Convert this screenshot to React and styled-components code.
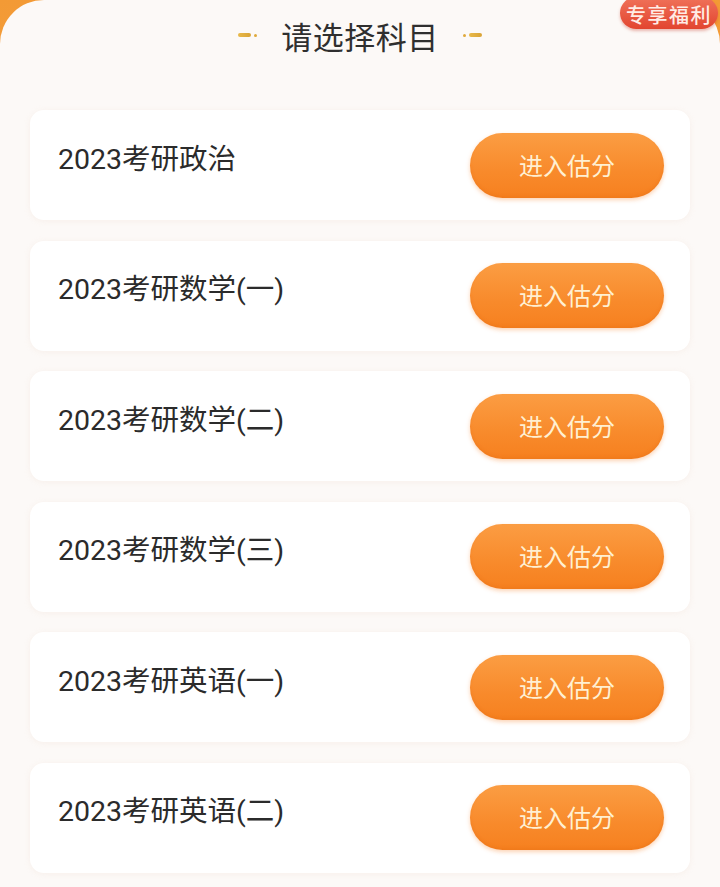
import React from "react";
import styled, { createGlobalStyle } from "styled-components";

const Global = createGlobalStyle`
  html, body { margin: 0; padding: 0; }
  body {
    background: #f7a444;
    font-family: "Roboto", "Noto Sans CJK SC", sans-serif;
  }
`;

const Page = styled.div`
  width: 720px;
  height: 887px;
  overflow: hidden;
  background: linear-gradient(180deg, #f39a35 0%, #f8b868 100%);
  position: relative;
`;

const Panel = styled.div`
  background: #fcf9f7;
  border-radius: 44px 44px 0 0;
  height: 100%;
  box-sizing: border-box;
  padding: 0 30px;
`;

const Header = styled.div`
  height: 70px;
  display: flex;
  align-items: center;
  justify-content: center;
  gap: 24px;
`;

const Title = styled.h1`
  margin: 0;
  font-family: "Noto Sans CJK SC", sans-serif;
  font-weight: 400;
  font-size: 31px;
  color: #2f2f2f;
  letter-spacing: 0.5px;
`;

const Deco = styled.span`
  display: flex;
  align-items: center;
  gap: 3px;
  flex-direction: ${(p) => (p.$flip ? "row-reverse" : "row")};
  & > i {
    display: block;
    width: 13px;
    height: 4px;
    border-radius: 2px;
    background: linear-gradient(90deg, #e8b94a, #d9a335);
  }
  & > b {
    display: block;
    width: 3px;
    height: 3px;
    border-radius: 50%;
    background: #e0a93b;
  }
`;

const Badge = styled.div`
  position: absolute;
  top: -3px;
  right: 2px;
  height: 32px;
  padding: 3px 6px 0;
  display: flex;
  align-items: center;
  justify-content: center;
  border-radius: 16px;
  background: linear-gradient(180deg, #f0725a 0%, #e2452f 100%);
  box-shadow: 0 2px 3px rgba(200, 60, 40, 0.35);
  color: #ffece6;
  font-family: "Noto Sans CJK SC", sans-serif;
  font-size: 20px;
  font-weight: 500;
  letter-spacing: 1.5px;
  line-height: 1;
  box-sizing: border-box;
`;

const List = styled.div`
  display: flex;
  flex-direction: column;
  gap: 20.5px;
  padding-top: 40px;
`;

const Card = styled.div`
  height: 110px;
  background: #ffffff;
  border-radius: 14px;
  box-shadow: 0 1px 6px rgba(230, 200, 185, 0.18);
  display: flex;
  align-items: center;
  justify-content: space-between;
  padding: 0 26px 0 28px;
`;

const Name = styled.div`
  font-family: "Roboto", "Noto Sans CJK SC", sans-serif;
  font-size: 28.5px;
  color: #2b2b2b;
  padding-bottom: 18px;
`;

const Button = styled.button`
  width: 194px;
  height: 65px;
  border: none;
  border-radius: 33px;
  background: linear-gradient(180deg, #fb9d43 0%, #f88a2b 60%, #f6801f 100%);
  box-shadow: 0 2px 4px rgba(245, 130, 40, 0.35), inset 0 -2px 3px rgba(230, 110, 20, 0.3);
  color: #fff0d2;
  font-family: "Noto Sans CJK SC", sans-serif;
  font-size: 24px;
  font-weight: 400;
  cursor: pointer;
  padding: 0 0 2px;
`;

const subjects = [
  "2023考研政治",
  "2023考研数学(一)",
  "2023考研数学(二)",
  "2023考研数学(三)",
  "2023考研英语(一)",
  "2023考研英语(二)",
];

export default function App() {
  return (
    <Page>
      <Global />
      <Panel>
        <Header>
          <Deco><i /><b /></Deco>
          <Title>请选择科目</Title>
          <Deco $flip><i /><b /></Deco>
        </Header>
        <List>
          {subjects.map((s) => (
            <Card key={s}>
              <Name>{s}</Name>
              <Button>进入估分</Button>
            </Card>
          ))}
        </List>
      </Panel>
      <Badge>专享福利</Badge>
    </Page>
  );
}
